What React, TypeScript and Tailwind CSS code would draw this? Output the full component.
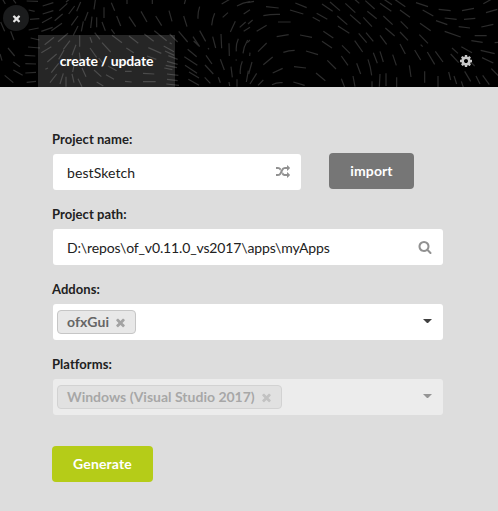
import type { ReactNode } from "react";

const TIMES =
  "M1490 1322q0 40-28 68l-136 136q-28 28-68 28t-68-28l-294-294-294 294q-28 28-68 28t-68-28l-136-136q-28-28-28-68t28-68l294-294-294-294q-28-28-28-68t28-68l136-136q28-28 68-28t68 28l294 294 294-294q28-28 68-28t68 28l136 136q28 28 28 68t-28 68l-294 294 294 294q28 28 28 68z";
const COG =
  "M1152 896q0-106-75-181t-181-75-181 75-75 181 75 181 181 75 181-75 75-181zm512-109v222q0 12-8 23t-20 13l-185 28q-19 54-39 91 35 50 107 138 10 12 10 25t-9 23q-27 37-99 108t-94 71q-12 0-26-9l-138-108q-44 23-91 38-16 136-29 186-7 28-36 28h-222q-14 0-24.5-8.5t-11.5-21.5l-28-184q-49-16-90-37l-141 107q-10 9-25 9-14 0-25-11-126-114-165-168-7-10-7-23 0-12 8-23 15-21 51-66.5t54-70.5q-27-50-41-99l-183-27q-13-2-21-12.5t-8-23.5v-222q0-12 8-23t19-13l186-28q14-46 39-92-40-57-107-138-10-12-10-24 0-10 9-23 26-36 98.5-107.5t94.5-71.5q13 0 26 10l138 107q44-23 91-38 16-136 29-186 7-28 36-28h222q14 0 24.5 8.5t11.5 21.5l28 184q49 16 90 37l142-107q9-9 24-9 13 0 25 10 129 119 165 170 7 8 7 22 0 12-8 23-15 21-51 66.5t-54 70.5q26 50 41 98l183 28q13 2 21 12.5t8 23.5z";
const RANDOM =
  "M666 481q-60 92-137 273-22-45-37-72.5t-40.5-63.5-51-56.5-63-35-81.5-14.5h-224q-14 0-23-9t-9-23v-192q0-14 9-23t23-9h224q250 0 410 225zm1126 799q0 14-9 23l-320 320q-9 9-23 9-13 0-22.5-9.5t-9.5-22.5v-192q-32 0-85 .5t-81 1-73-1-71-5-64-10.5-63-18.5-58-28.5-59-40-55-53.5-56-69.5q59-93 136-273 22 45 37 72.5t40.5 63.5 51 56.5 63 35 81.5 14.5h256v-192q0-14 9-23t23-9q12 0 24 10l319 319q9 9 9 23zm0-896q0 14-9 23l-320 320q-9 9-23 9-13 0-22.5-9.5t-9.5-22.5v-192h-256q-48 0-87 15t-69 45-51 61.5-45 77.5q-32 62-78 171-29 66-49.5 111t-54 105-64 100-74 83-90 68.5-106.5 42-128 16.5h-224q-14 0-23-9t-9-23v-192q0-14 9-23t23-9h224q48 0 87-15t69-45 51-61.5 45-77.5q32-62 78-171 29-66 49.5-111t54-105 64-100 74-83 90-68.5 106.5-42 128-16.5h256v-192q0-14 9-23t23-9q12 0 24 10l319 319q9 9 9 23z";
const SEARCH =
  "M1216 832q0-185-131.5-316.5t-316.5-131.5-316.5 131.5-131.5 316.5 131.5 316.5 316.5 131.5 316.5-131.5 131.5-316.5zm512 832q0 52-38 90t-90 38q-54 0-90-38l-343-342q-179 124-399 124-143 0-273.5-55.5t-225-150-150-225-55.5-273.5 55.5-273.5 150-225 225-150 273.5-55.5 273.5 55.5 225 150 150 225 55.5 273.5q0 220-124 399l343 343q37 37 37 90z";

function Icon({ d, className }: { d: string; className: string }) {
  return (
    <svg viewBox="0 0 1792 1792" className={`shrink-0 fill-current ${className}`}>
      <path d={d} />
    </svg>
  );
}

// Field-line dashes of the header, drawn in thirds of a pixel.
const DASHES_A =
  "M8 -2L16 12M40 0L48 10M58 18L72 30M80 3L114 4M86 30L104 34M90 58L118 56M86 90L116 84M128 18L160 8M128 42L160 32M126 68L156 52M124 94L158 82M154 92L186 70M164 62L188 42M178 32L202 10M198 6L208 -2M206 42L224 18M214 76L234 48M220 106L234 78M174 125L204 100M190 148L210 122M230 34L242 6M254 62L264 36M244 94L250 64M272 84L276 50M290 82L290 52M282 28L286 0M312 54L312 22M316 92L306 66M334 8L344 32M350 48L362 78M334 88L344 102M2 66L14 94M32 94L42 120M24 144L44 168M0 162L6 182M84 141L120 144M92 114L118 120M74 166L106 168M40 186L60 200M76 191L108 192M40 210L68 226M76 219L108 217M14 226L40 248M80 247L108 244M134 134L162 112M124 158L154 140M142 186L170 162M136 208L144 204M176 178L192 150M154 218L176 190M150 248L170 222M190 220L180 252M198 230L198 260M216 166L228 134M239 106L239 140M238 158L242 190M222 196L218 216M216 222L222 248M246 204L258 230M234 236L246 260M270 112L276 128M270 144L290 172M284 98L300 118M306 128L332 156M336 106L366 128M296 174L312 194M256 180L270 200M282 210L304 230M324 198L350 212M318 224L342 238M290 246L310 258M350 180L374 190";
const DASHES_B =
  "M6 -2L6 12M82 -2L82 12M178 12L182 -2M12 50L32 80M48 34L66 66M92 48L110 77M132 32L141 64M176 48L186 80M219 56Q218 38 224 20M260 76Q262 56 269 40M293 52L309 38M290 12L314 -2M336 18Q354 8 375 5M356 42L375 29M316 96L331 64M344 82L362 66M356 94L375 82M12 108L40 130M58 102L86 124M88 92L125 122M134 102L158 126M134 128L140 132M161 94L188 126M4 144L26 158M70 143L109 160M116 138L147 155M120 153L148 166M66 168L94 178M130 167L158 178M126 184L158 193M122 196L156 203M0 214L20 214M54 220L88 222M118 204L142 209M126 222L160 226M0 244L20 246M54 245L92 245M126 238L158 242M124 252L162 256M204 110L224 140M224 92L242 124M188 148L215 170M178 170L217 196M180 196L216 220M192 216L222 234M190 238L222 256M206 123L222 138M263 110L272 144M288 102L290 145M312 130L313 168M249 144L252 148M243 166L261 192M240 195L265 222M286 178L298 210M239 232L256 250M280 232L286 248M318 200L322 232M333 178L334 182M334 154Q332 134 340 116M354 160Q356 140 368 120M346 222Q344 202 352 184M312 246L314 258M336 238L336 260M364 246L370 212M374 168L375 158";
const DASHES_RIGHT =
  "M-2 8L18 4M54 20L92 24M46 47Q70 42 96 43M142 9L176 23M126 30L166 42M90 66L128 66M26 94L56 76M0 72L14 60M86 110L122 104M156 105L192 112M-2 128L6 120M30 155L56 129M106 157Q122 151 140 151M174 153L210 164M46 194L74 171M74 219L104 205M138 200L174 204M2 222L12 186M6 252L26 220M30 256L46 240M72 254Q88 246 104 248M136 246L170 256M204 219L232 242M238 181L264 207M280 168L300 196M280 236L290 262M315 228L321 260M326 190L338 222M360 178Q368 200 371 226M372 244L372 262M396 222L394 260M414 220L414 258M446 232L446 262M434 164L445 196M396 154L406 186M376 158L388 190M320 122L344 156M332 100L356 128M354 98L376 124M396 106L416 133M282 136L306 160M222 124L252 144M226 94L256 114M194 52L216 64M206 40L238 58M222 12L254 34M246 6L276 32M268 48L298 74M270 78L304 100M292 10L322 38M306 44L338 72M320 -2L334 10M346 52L372 80M352 2L380 27M358 34L386 56M396 10L430 34M408 -2L432 14M406 48L434 74M412 84L440 108M440 -2L472 20M456 30L486 52M458 64L480 86M456 96L480 121M456 132L472 162M484 196L489 231M530 214L530 248M570 228L570 262M500 150L518 180M538 156L560 193M562 154L585 186M514 104L540 130M518 134L524 140M516 70L548 92M504 8L540 20M524 30L556 48M572 28L608 32M642 32L678 25M706 11L730 -2M590 54L626 58M564 62L598 74M632 80L666 84M648 58L682 55M700 81L736 73M714 38L748 28M590 94L638 111M680 107L716 107M670 122L704 127M740 128L750 127M640 140L672 158M612 144L630 160M698 151L740 161M702 173L736 189M608 162L632 188M602 216L608 240M618 228L626 252M640 244L646 262M650 214L668 244M664 182L680 198M684 228L696 252M704 226L724 254M730 206L752 228";

function Pattern() {
  return (
    <svg
      viewBox="0 0 1494 261"
      className="absolute inset-0 h-[87px] w-[498px] fill-none stroke-[#2c2c2c] stroke-[3.6]"
    >
      <path d={DASHES_A} />
      <path d={DASHES_B} transform="translate(375 0)" />
      <path d={DASHES_RIGHT} transform="translate(744 0)" />
    </svg>
  );
}

function Field({ label, children }: { label: string; children: ReactNode }) {
  return (
    <div className="flex h-[75px] flex-col">
      <label className="-ml-px h-[23px] text-[13px] leading-[16px] font-bold tracking-[0.05px] text-[#212121]">
        {label}
      </label>
      {children}
    </div>
  );
}

function Input({
  value,
  icon,
  className,
  textClass,
}: {
  value: string;
  icon: string;
  className: string;
  textClass: string;
}) {
  return (
    <div
      className={`flex h-9 items-center justify-between rounded-[3px] bg-white pl-[14px] text-[14px] text-[#212121] ${className}`}
    >
      <span className={`pt-px ${textClass}`}>{value}</span>
      <Icon d={icon} className="mr-[11px] size-[14px] text-[#919191]" />
    </div>
  );
}

function Dropdown({
  tag,
  tagClass,
  disabled = false,
}: {
  tag: string;
  tagClass: string;
  disabled?: boolean;
}) {
  return (
    <div
      className={`flex h-9 w-[390px] items-center justify-between rounded-[3px] bg-white pr-[11px] pl-1 ${disabled ? "opacity-45" : ""}`}
    >
      <span
        className={`flex h-6 items-center justify-between rounded-[4px] border border-[#c6c6c6] bg-[#e8e8e8] pr-2 pl-[9px] text-[14px] font-bold text-[#666] ${tagClass}`}
      >
        <span className="pb-[2px]">{tag}</span>
        <Icon d={TIMES} className="size-[13px] text-[#a3a3a3]" />
      </span>
      <svg viewBox="0 0 8 4" className="mb-[2px] h-[4.5px] w-[9px] fill-[#404040]">
        <path d="M0 0h8L4 4z" />
      </svg>
    </div>
  );
}

export default function App() {
  return (
    <div className="h-[511px] w-[498px] overflow-hidden bg-[#ddd] font-['Lato',sans-serif]">
      <header className="relative flex h-[87px] items-end justify-between bg-black">
        <Pattern />
        <button className="absolute top-[5px] left-[3px] flex size-[26px] items-center justify-center rounded-full bg-[#1b1c1d] text-[#e4e4e4]">
          <Icon d={TIMES} className="size-[11px]" />
        </button>
        <div className="relative ml-[38px] flex h-[52px] w-[137px] items-center justify-center bg-white/15 pb-[2px] text-[14px] font-bold tracking-[-0.13px] text-white">
          create / update
        </div>
        <Icon d={COG} className="relative mr-[25px] mb-[19px] size-[14px] text-[#c8c8c8]" />
      </header>
      <main className="flex flex-col pt-[44px] pl-[53px]">
        <div className="flex">
          <Field label="Project name:">
            <Input value="bestSketch" icon={RANDOM} className="w-[248px]" textClass="tracking-[0.08px]" />
          </Field>
          <button className="mt-[22px] ml-[28px] h-9 w-[85px] rounded-[4px] bg-[#767676] pb-[2px] text-[14px] font-bold tracking-[0.1px] text-white">
            import
          </button>
        </div>
        <Field label="Project path:">
          <Input
            value="D:\repos\of_v0.11.0_vs2017\apps\myApps"
            icon={SEARCH}
            className="w-[390px]"
            textClass="tracking-[-0.14px]"
          />
        </Field>
        <Field label="Addons:">
          <Dropdown tag="ofxGui" tagClass="w-[79px] tracking-[0.1px]" />
        </Field>
        <Field label="Platforms:">
          <Dropdown tag="Windows (Visual Studio 2017)" tagClass="w-[225px]" disabled />
        </Field>
        <button className="mt-[15px] -ml-px h-9 w-[101px] rounded-[4px] bg-[#b5cc18] pb-[2px] text-[14px] font-bold tracking-[0.15px] text-white">
          Generate
        </button>
      </main>
    </div>
  );
}
